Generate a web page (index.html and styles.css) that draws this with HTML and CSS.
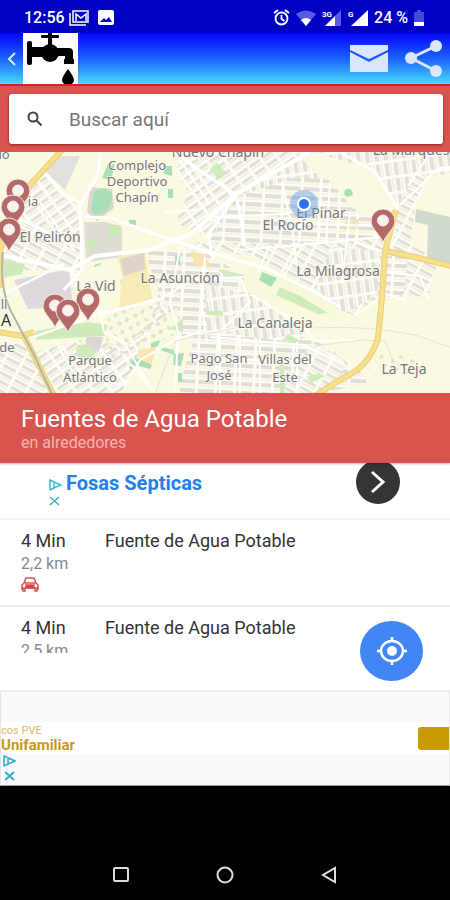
FILE: index.html
```
<!DOCTYPE html>
<html lang="es">
<head>
  <meta charset="UTF-8">
  <meta name="viewport" content="width=device-width, initial-scale=1.0">
  <title>Fuentes de Agua Potable</title>
  <link rel="stylesheet" href="styles.css">
</head>
<body>
  <!-- status bar -->
  <div class="status-bar">
    <span class="clock">12:56</span>
    <svg width="20" height="16" viewBox="0 0 20 16" fill="none" stroke="#fff" stroke-width="2">
      <path d="M1 3v12h16" stroke-width="1.5"/>
      <path d="M4 1h15v11H4z" stroke-width="1.5"/>
      <path d="M7 11V4l5 4 5-4v7" stroke-width="1.5"/>
    </svg>
    <svg class="picture-icon" width="16" height="15" viewBox="0 0 16 15">
      <rect width="16" height="15" rx="2" fill="#fff"/>
      <path d="M2 12l4-4 2 2 3-3 3 5z" fill="#0000c4"/>
    </svg>
    <div class="status-right">
      <svg width="17" height="17" viewBox="0 0 17 17" fill="none" stroke="#fff" stroke-width="1.8">
        <circle cx="8.500" cy="9.500" r="6"/>
        <path d="M8.500 6v4l3 2M1 4l4-3M16 4l-4-3"/>
      </svg>
      <svg width="20" height="16" viewBox="0 0 20 16">
        <path d="M0 4Q10-3 20 4L10 16z" fill="#5b5be0"/>
        <path d="M5 10q5-4 10 0l-5 6z" fill="#fff"/>
      </svg>
      <svg width="20" height="18" viewBox="0 0 20 18">
        <path d="M19 1v16H3z" fill="#5b5be0"/>
        <path d="M13 7v10H3z" fill="#fff"/>
        <text x="0" y="8" class="net">3G</text>
      </svg>
      <svg width="20" height="18" viewBox="0 0 20 18">
        <path d="M20 1v16H3z" fill="#fff"/>
        <text x="0" y="8" class="net">G</text>
      </svg>
      <span class="battery-text">24 %</span>
      <svg width="10" height="18" viewBox="0 0 10 18">
        <path d="M0 3h3V1h4v2h3v14H0z" fill="#4848d8"/>
        <path d="M0 13h10v4H0z" fill="#fff"/>
      </svg>
    </div>
  </div>

  <!-- app header -->
  <header class="app-header">
    <button class="icon-btn back" aria-label="Volver">
      <svg width="9" height="16" viewBox="0 0 9 16" fill="none" stroke="#d6e8ff" stroke-width="2"><path d="M8 2L2 8l6 6"/></svg>
    </button>
    <svg class="logo" width="55" height="51" viewBox="0 0 55 51">
      <rect width="55" height="51" fill="#fff"/>
      <rect x="18" y="2" width="18" height="3" rx="1"/>
      <rect x="25" y="0" width="4" height="14"/>
      <rect x="4" y="8" width="5" height="24" rx="2"/>
      <rect x="8" y="14" width="14" height="10"/>
      <ellipse cx="27" cy="20" rx="9" ry="9"/>
      <path d="M33 15h13q4 0 4 4v7h1v5h-10v-5h1v-3h-9z"/>
      <path d="M45 36q6 8 6 11a6 5 0 0 1-12 0q0-3 6-11z"/>
    </svg>
    <div class="header-actions">
      <button class="icon-btn" aria-label="Correo">
        <svg width="38" height="27" viewBox="0 0 38 27" fill="#dbe6ff"><path d="M0 0h38v5L19 14 0 5z"/><path d="M0 7l19 10L38 7v20H0z"/></svg>
      </button>
      <button class="icon-btn" aria-label="Compartir">
        <svg width="37" height="37" viewBox="0 0 37 37" fill="#dbe6ff">
          <path d="M31 6L6 18l25 13" fill="none" stroke="#dbe6ff" stroke-width="3"/>
          <circle cx="31" cy="6" r="6"/><circle cx="6" cy="18" r="6"/><circle cx="31" cy="31" r="6"/>
        </svg>
      </button>
    </div>
  </header>

  <!-- search -->
  <form class="search">
    <label class="search-box">
      <svg width="16" height="16" viewBox="0 0 16 16" fill="none" stroke="#444" stroke-width="2"><circle cx="6" cy="6" r="4.500"/><path d="M9.500 9.500l5 5"/></svg>
      <input type="text" placeholder="Buscar aquí" aria-label="Buscar aquí">
    </label>
  </form>

  <!-- map -->
  <main class="map">
    <svg class="map-canvas" viewBox="0 0 450 241" preserveAspectRatio="xMidYMid slice">
      <defs>
        <pattern id="a" width="15" height="9" patternUnits="userSpaceOnUse" patternTransform="rotate(-35)">
          <rect width="15" height="9" fill="#fcfcf4"/><rect x="1" y="1" width="12" height="3" fill="#e1dfd7"/><rect x="1" y="5" width="12" height="2" fill="#f1efda"/>
        </pattern>
        <pattern id="b" width="9" height="16" patternUnits="userSpaceOnUse" patternTransform="rotate(-8)">
          <rect width="9" height="16" fill="#fcfcf4"/><rect x="1" y="1" width="4" height="13" fill="#e2e0d8"/><rect x="6" y="1" width="2" height="13" fill="#f3f1dc"/>
        </pattern>
        <pattern id="c" width="17" height="8" patternUnits="userSpaceOnUse" patternTransform="rotate(28)">
          <rect width="17" height="8" fill="#fcfcf4"/><rect x="1" y="1" width="14" height="3" fill="#e1dfd7"/><rect x="1" y="5" width="14" height="2" fill="#f2f0dc"/>
        </pattern>
        <pattern id="d" width="19" height="9" patternUnits="userSpaceOnUse" patternTransform="rotate(3)">
          <rect width="19" height="9" fill="#fcfcf4"/><rect x="1" y="1" width="16" height="4" fill="#dfddd5"/><rect x="1" y="6" width="16" height="2" fill="#f6f4df"/>
        </pattern>
        <pattern id="e" width="12" height="13" patternUnits="userSpaceOnUse" patternTransform="rotate(20)">
          <rect x="1" y="2" width="4" height="3" fill="#e4e1d0"/><rect x="7" y="8" width="3" height="4" fill="#e4e1d0"/>
        </pattern>
        <g id="pin">
          <circle cy="-22" r="6" fill="#f7f3ec"/>
          <path d="M0 0C-2-8-12-14-12-22a12 12 0 0 1 24 0C12-14 2-8 0 0zM0-28a5 5 0 1 0 0 11 5 5 0 0 0 0-11z" fill="#b56a6a" fill-rule="evenodd" stroke="#f5eeea" stroke-width="1"/>
        </g>
      </defs>
      <rect width="450" height="242" fill="#fbf9e0"/>

      <!-- neighbourhood blocks -->
      <path d="M25 42l20-19 17 22 20 8-5 63-45-8-10-42z" fill="url(#a)"/>
      <path d="M0 78l25-8 55 15v33H5L0 101z" fill="url(#c)"/>
      <path d="M0 194l28-4 24 52H0z" fill="url(#c)"/>
      <path d="M35 200l44-12 45 5 28-24 5-30 38-17 4 23-48 30-30 67H55z" fill="url(#a)"/>
      <path d="M195 0h105l-5 10-59 33-26-22z" fill="url(#a)"/>
      <path d="M174 15l21-10 41 38-28 42-32-14 12-30z" fill="url(#a)"/>
      <path d="M208 78l30-38 62-35 62 60-5 20-80 4-65 5z" fill="url(#b)"/>
      <path d="M236 45l60-20 60 5 24 32 10 34-50-4-60 8-72-8z" fill="url(#d)"/>
      <path d="M310 0h140v22l-33 12-18 20-28-38z" fill="url(#b)"/>
      <path d="M399 54l16-30 20-4-20 33-5 40 30 15-12 36-44 2z" fill="url(#c)"/>
      <path d="M192 90l90 2 110-8-5 55-34 24-55-20-42-38-60-9z" fill="url(#c)"/>
      <path d="M330 95l50 4-3 44-32 18-30-20z" fill="url(#b)"/>
      <path d="M384 104h24l-4 38-26 9z" fill="url(#d)"/>
      <path d="M145 100l50-5 60 35-5 46-87-24z" fill="url(#d)"/>
      <path d="M177 130l65 7 55 45 30 12 43 36-51 12H180z" fill="url(#d)"/>
      <path d="M205 132l50 12 52 38-10 9-90-12z" fill="url(#b)"/>
      <path d="M312 190l32 18-2 15 30-8-50 27h-42z" fill="url(#c)"/>
      <path d="M108 160l60-12 8 35-33 10-38 20z" fill="url(#e)"/>
      <path d="M372 202h45v20h-35zM120 160h50v30h-50z" fill="url(#e)"/>

      <!-- open land -->
      <path d="M100 15l80-10-18 50-18 28-58-22z" fill="#fbf9e0"/>
      <path d="M300 6l30 2 28 16 28 30-8 14-26-12-20-25z" fill="#fbf9e0"/>
      <path d="M250 114l36 8 50 33-4 14-50-20-42-10z" fill="#f8f8da"/>
      <path d="M140 190l55-6-12 38-44 5z" fill="#faf8df"/>
      <path d="M430 24l20-2v40l-30-10z" fill="#fbf9e0"/>

      <!-- industrial and built areas -->
      <path d="M52 4h28L65 38 46 20z" fill="#e2e0dd"/>
      <path d="M14 128l55-11 3 30-9 8-35 2z" fill="#dfd9dd"/>
      <path d="M416 57l34 8v52l-23-13 1-31-13-3z" fill="#d0dacf"/>
      <path d="M90 35l22 2 2 19-17 13-10-9z" fill="#dad8d1"/>
      <path d="M84 70h22l16 5v30l-36 5z" fill="#e0ddd6"/>
      <path d="M120 128l24-10v12l-22 6zM86 185h17l-3 12-14 5z" fill="#dcd5da"/>
      <path d="M117 105l28-7 4 30 4 22-34 8 3-35z" fill="#f8ebb6"/>
      <path d="M120 107l24-6 1 16-21 7z" fill="#dfd4cb"/>
      <path d="M191 99l13 3 8 14-18-3zM345 70l14-3v9l-15 2z" fill="#f7e2b0"/>
      <path d="M138 198l18-3-4 17-13 2z" fill="#f9e7b3"/>

      <!-- green areas -->
      <g fill="#cfebbc">
        <path d="M108 73h12v12l-12-2zM87 88h10v8H87zM3 108l22 4-3 10-18 4zM210 17l7-6 10 10-9 7z"/>
        <path d="M35 179l53-9 20 3-4 11-68 4zM77 193l14-1 4 13-12 3-7-5zM280 135l20 9 28 17-10 1-42-19zM220 117l24 6v5l-25-8z"/>
        <path d="M170 177l13-11v14zM208 159h15v5l-14-1zM288 182l14 8-6 3-12-6zM280 204l4 0v38h-4zM307 225l12-4 6 3-14 7z"/>
      </g>
      <g fill="#a9dfb4">
        <path d="M94 39q12-6 18 2 1 12-8 20-10 4-13-3zM108 12l7 0-4 16-9-2zM163 14h9v10l-8-2zM168 37h5v9h-5z"/>
        <path d="M112 66l8 2v3l-8-2zM129 68h7v5h-7zM345 38q7-4 8 5l-6 2-3-3zM262 120l15 6-6 9-12-7z"/>
        <path d="M151 191l9-3-2 6-7 2zM161 195l13 3v5l-13-5zM174 202l10-1-3 13-8-1zM134 205l18 8-2 4-14-4-4 5-5-3zM175 103h5v10h-5zM178 221h4v9h-4zM94 113l7-2-1 2-6 2z"/>
      </g>

      <!-- white streets -->
      <g fill="none" stroke="#fff" stroke-linejoin="round">
        <path d="M101 0l-4 25-17 28 2 65-18 20M44 20l20 23 17 8M85 65l25 1 45 16 20 7 40 13 50 14 50 24 25 15" stroke-width="3"/>
        <path d="M0 103l70 15 25-14 55-6 40-16 38-32 8-8 60-34 14-8" stroke-width="4"/>
        <path d="M175 0l24 18 37 25 4 20 5 30M236 43l-28 40 5 25M340 0l35 20 14 22 9 15-9 38" stroke-width="3"/>
        <path d="M68 118l28 26 8 36 20 10 30 52M104 160l-70 25M100 163l60-16 35-20 50-2M80 152l28 8 45-12" stroke-width="2"/>
        <path d="M155 242l-24-30-24 25M55 188l20 36 50 9 15-25 35-20 30-10M180 95l-10 55 8 30-3 62M205 105l-3 50 5 35M240 125l10 25-30 30M250 142l50 30 15 17 42-1" stroke-width="2"/>
        <path d="M210 185l95 8 40 20M195 205l115 5M220 184v58M240 183v59M260 186v56M297 190v52M240 98l60-5 80-8M282 30l10 45 5 40M330 30l-4 62M350 60l-8 72M300 72l85 2M355 90l28 10M210 65l80-3M270 93l-12 27M305 90l-22 36" stroke-width="2"/>
        <path d="M377 149l-22 14M381 140l26 9M382 120l38 4 9 24M408 34l20-30M399 54l40-38 11-1M180 8l30 45M164 60l35-2M15 65l60 30M40 50l35 50M4 142l60-30" stroke-width="2"/>
      </g>
      <path d="M315 176q50-3 100 7l35 12M315 194l45-6 25 1 8 20 15 10" fill="none" stroke="#e6e5d3"/>
      <path d="M155 242l20-53 60-13" fill="none" stroke="#e6e3d8"/>

      <!-- main roads -->
      <g fill="none" stroke="#e6cf7e" stroke-width="6">
        <path d="M62-2L29 34 12 60-1 102v34M396 58l-11 42-3 45-4 41q-8 28-35 40l-28 18M385 99l30 6 36 9"/>
        <path d="M-2 180l24 4 12-4M23 182l9 18 22 44"/>
      </g>
      <g fill="none" stroke="#f8e08a" stroke-width="4">
        <path d="M62-2L29 34 12 60-1 102v34M396 58l-11 42-3 45-4 41q-8 28-35 40l-28 18M385 99l30 6 36 9"/>
        <path d="M-2 180l24 4 12-4M23 182l9 18 22 44"/>
      </g>
      <path d="M3 100Q-1 140 14 165l20 38 18 39" fill="none" stroke="#b5b4aa" stroke-width="2"/>

      <g class="place">
        <text x="137" y="18">Complejo</text>
        <text x="137" y="34">Deportivo</text>
        <text x="137" y="50">Chapín</text>
        <g class="area">
          <text x="218" y="5">Nuevo Chapín</text>
          <text x="415" y="3">La Marquesa</text>
          <text x="50" y="90">El Pelirón</text>
          <text x="180" y="131">La Asunción</text>
          <text x="96" y="139">La Vid</text>
          <text x="321" y="66">El Pinar</text>
          <text x="288" y="78">El Rocío</text>
          <text x="338" y="124">La Milagrosa</text>
          <text x="275" y="176">La Canaleja</text>
          <text x="404" y="222">La Teja</text>
        </g>
        <text x="4" y="7">lo</text>
        <text x="33" y="54">ia</text>
        <text x="219" y="211">Pago San</text>
        <text x="219" y="228">José</text>
        <text x="285" y="212">Villas del</text>
        <text x="285" y="230">Este</text>
        <text x="90" y="213">Parque</text>
        <text x="90" y="230">Atlántico</text>
        <text x="7" y="200">de</text>
        <text x="4" y="157">ll</text>
        <text x="6" y="174" class="city">A</text>
      </g>

      <!-- fountains -->
      <use href="#pin" x="18" y="61"/>
      <use href="#pin" x="13" y="77"/>
      <use href="#pin" x="9" y="100"/>
      <use href="#pin" x="55" y="176"/>
      <use href="#pin" x="88" y="170"/>
      <use href="#pin" x="68" y="181"/>
      <use href="#pin" x="383" y="91"/>

      <!-- own position -->
      <circle cx="304" cy="52" r="14" fill="#5b98f0" fill-opacity=".45"/>
      <circle cx="304" cy="52" r="6" fill="#2a72ec" stroke="#fff" stroke-width="2"/>
    </svg>
  </main>

  <section class="title-bar">
    <h1>Fuentes de Agua Potable</h1>
    <p>en alrededores</p>
  </section>

  <!-- results -->
  <section class="results">
    <div class="promo">
      <div class="ad-marks">
        <svg width="13" height="12" viewBox="0 0 13 12" fill="none" stroke="#35b5cf" stroke-width="1.400"><path d="M1 11V1l11 5-7 3V4"/><path d="M1 11l4-2"/></svg>
        <svg width="11" height="10" viewBox="0 0 11 10" fill="none" stroke="#35b5cf" stroke-width="1.500"><path d="M1 1l9 8M10 1L1 9"/></svg>
      </div>
      <a href="#">Fosas Sépticas</a>
      <button class="next" aria-label="Abrir anuncio">
        <svg width="16" height="24" viewBox="0 0 16 24" fill="none" stroke="#fff" stroke-width="3"><path d="M2 2l11 10L2 22"/></svg>
      </button>
    </div>
    <div class="item">
      <div class="distance">
        <span class="time">4 Min</span>
        <span class="km">2,2 km</span>
        <svg width="18" height="15" viewBox="0 0 18 15" fill="none" stroke="#d9534f" stroke-width="1.500">
          <path d="M3 6l2-5h8l2 5M1 13V8l2-2h12l2 2v5M1 11h16M2 11v3h2v-3M14 11v3h2v-3"/>
          <path d="M5 8h8v3H5z" fill="#d43b35"/>
        </svg>
      </div>
      <span class="name">Fuente de Agua Potable</span>
    </div>
    <div class="item">
      <div class="distance cut">
        <span class="time">4 Min</span>
        <span class="km">2,5 km</span>
      </div>
      <span class="name">Fuente de Agua Potable</span>
    </div>
    <button class="locate" aria-label="Mi ubicación">
      <svg width="30" height="28" viewBox="0 0 30 28" fill="none" stroke="#fff" stroke-width="2.500">
        <ellipse cx="15" cy="14" rx="11" ry="10"/>
        <path d="M15 0v4M15 24v4M0 14h4M26 14h4"/>
        <circle cx="15" cy="14" r="5" fill="#fff" stroke="none"/>
      </svg>
    </button>
  </section>

  <!-- banner -->
  <aside class="banner">
    <div class="banner-body">
      <div class="banner-text">
        <span>cos PVE</span>
        <strong>Unifamiliar</strong>
      </div>
      <button class="banner-btn" aria-label="Ver anuncio"></button>
    </div>
    <div class="banner-marks">
      <svg width="13" height="12" viewBox="0 0 13 12" fill="none" stroke="#2eaed0" stroke-width="1.600"><path d="M1 11V1l11 5-7 3V4"/><path d="M1 11l4-2"/></svg>
      <svg width="11" height="10" viewBox="0 0 11 10" fill="none" stroke="#2eaed0" stroke-width="2"><path d="M1 1l9 8M10 1L1 9"/></svg>
    </div>
  </aside>

  <nav class="nav-bar">
    <button class="icon-btn" aria-label="Recientes">
      <svg width="18" height="18" viewBox="0 0 18 18" fill="none" stroke="#ddd" stroke-width="2"><rect x="2" y="2" width="14" height="13" rx="1"/></svg>
    </button>
    <button class="icon-btn" aria-label="Inicio">
      <svg width="18" height="18" viewBox="0 0 18 18" fill="none" stroke="#ddd" stroke-width="2"><circle cx="9" cy="9" r="7.500"/></svg>
    </button>
    <button class="icon-btn" aria-label="Atrás">
      <svg width="18" height="18" viewBox="0 0 18 18" fill="none" stroke="#ddd" stroke-width="2"><path d="M15 2v14L3 9z"/></svg>
    </button>
  </nav>
</body>
</html>
```
FILE: styles.css
```
* {
  box-sizing: border-box;
}
body {
  margin: 0;
  min-height: 100vh;
  display: flex;
  flex-direction: column;
  font-family: Roboto, "Liberation Sans", sans-serif;
  background-color: #fff;
  color: #333;
}
svg {
  display: block;
  flex-shrink: 0;
}
button {
  border: none;
  padding: 0;
  cursor: pointer;
}
.icon-btn {
  background: none;
}

/* status bar */
.status-bar {
  display: flex;
  align-items: center;
  height: 33px;
  padding: 2px 26px 0 24px;
  gap: 4px;
  background-color: #0000c4;
  color: #fff;
  font-size: 16px;
  font-weight: 500;
}
.picture-icon {
  margin-left: 5px;
}
.status-right {
  display: flex;
  align-items: center;
  gap: 6px;
  margin-left: auto;
}
.net {
  font-size: 8px;
  font-weight: 700;
  fill: #fff;
}

/* header */
.app-header {
  display: flex;
  align-items: center;
  height: 51px;
  padding: 0 8px 0 7px;
  background: linear-gradient(#0505fa, #1b62ff 50%, #45dcfa);
}
.logo {
  margin-left: 7px;
}
.header-actions {
  display: flex;
  align-items: center;
  gap: 17px;
  margin-left: auto;
}

/* search */
.search {
  padding: 8px 7px 8px 9px;
  background-color: #d9534f;
  border-top: 2px solid #d6211f;
}
.search-box {
  display: flex;
  align-items: center;
  gap: 24px;
  height: 50px;
  padding: 0 18px;
  background-color: #fff;
  border-radius: 3px;
  box-shadow: 0 1px 3px rgba(90,0,0,0.6);
}
.search-box input {
  flex: 1;
  min-width: 0;
  border: none;
  outline: none;
  font-family: inherit;
  font-size: 19px;
  color: #333;
}
.search-box input::placeholder {
  color: #777;
  opacity: 1;
}

/* map */
.map {
  flex: 1 1 200px;
  min-height: 200px;
  display: flex;
  overflow: hidden;
}
.map-canvas {
  width: 100%;
}
.place {
  font-family: "Noto Sans", "Open Sans", sans-serif;
  font-size: 13px;
  fill: #77777a;
  text-anchor: middle;
  stroke: #fbfaf0;
  stroke-width: 2px;
  stroke-opacity: 0.7;
  paint-order: stroke;
}
.place .area {
  font-size: 14px;
}
.place .city {
  font-size: 16px;
  fill: #333;
}

/* title */
.title-bar {
  position: relative;
  z-index: 1;
  height: 70px;
  padding: 12px 21px;
  background-color: #d9534f;
  color: #fff;
  box-shadow: 0 1px 2px rgba(0,0,0,0.3);
}
.title-bar h1 {
  margin: 0;
  font-size: 24px;
  line-height: 28px;
  font-weight: 400;
}
.title-bar p {
  margin: 0;
  font-size: 16px;
  line-height: 20px;
  color: #f2b5b0;
}

/* results */
.results {
  position: relative;
}
.promo {
  display: flex;
  align-items: flex-start;
  height: 57px;
  padding: 0 50px 0 49px;
  border-bottom: 2px solid #f3f3f3;
}
.ad-marks {
  padding-top: 16px;
}
.ad-marks svg + svg {
  margin-top: 5px;
}
.promo a {
  margin-left: 4px;
  font-size: 20px;
  line-height: 40px;
  font-weight: 700;
  color: #2180ea;
  text-decoration: none;
}
.next {
  display: flex;
  align-items: center;
  justify-content: center;
  width: 44px;
  height: 44px;
  margin: -3px 0 0 auto;
  border-radius: 50%;
  background-color: #353535;
}
.item {
  display: flex;
  height: 87px;
  padding: 9px 21px;
  border-bottom: 2px solid #eee;
}
.item:nth-child(3) {
  height: 83px;
  border-bottom: none;
}
.distance {
  width: 84px;
}
.distance.cut {
  height: 37px;
  overflow: hidden;
}
.distance span {
  display: block;
}
.time, .name {
  font-size: 18px;
  line-height: 24px;
}
.km {
  font-size: 16px;
  line-height: 22px;
  color: #888;
}
.distance svg {
  margin-top: 2px;
}
.locate {
  position: absolute;
  right: 27px;
  bottom: 9px;
  display: flex;
  align-items: center;
  justify-content: center;
  width: 63px;
  height: 60px;
  border-radius: 50%;
  background-color: #4285f4;
}

/* banner */
.banner {
  height: 96px;
  padding-top: 30px;
  background-color: #fafafa;
  border: 1px solid #e4e4e4;
  border-top: 2px solid #eee;
  border-bottom-color: #999;
}
.banner-body {
  display: flex;
  align-items: center;
  justify-content: space-between;
  height: 32px;
  background-color: #fff;
}
.banner-text {
  color: #c9981a;
}
.banner-text span, .banner-text strong {
  display: block;
  font-size: 15px;
  line-height: 15px;
}
.banner-text span {
  font-size: 11px;
  color: #dcb868;
}
.banner-btn {
  width: 31px;
  height: 23px;
  border-radius: 3px 0 0 3px;
  background-color: #c99a02;
}
.banner-marks {
  padding: 1px 2px;
}
.banner-marks svg + svg {
  margin: 4px 0 0 1px;
}

/* android buttons */
.nav-bar {
  display: flex;
  align-items: flex-end;
  justify-content: center;
  gap: 86px;
  height: 114px;
  padding-bottom: 16px;
  background-color: #000;
}
```
